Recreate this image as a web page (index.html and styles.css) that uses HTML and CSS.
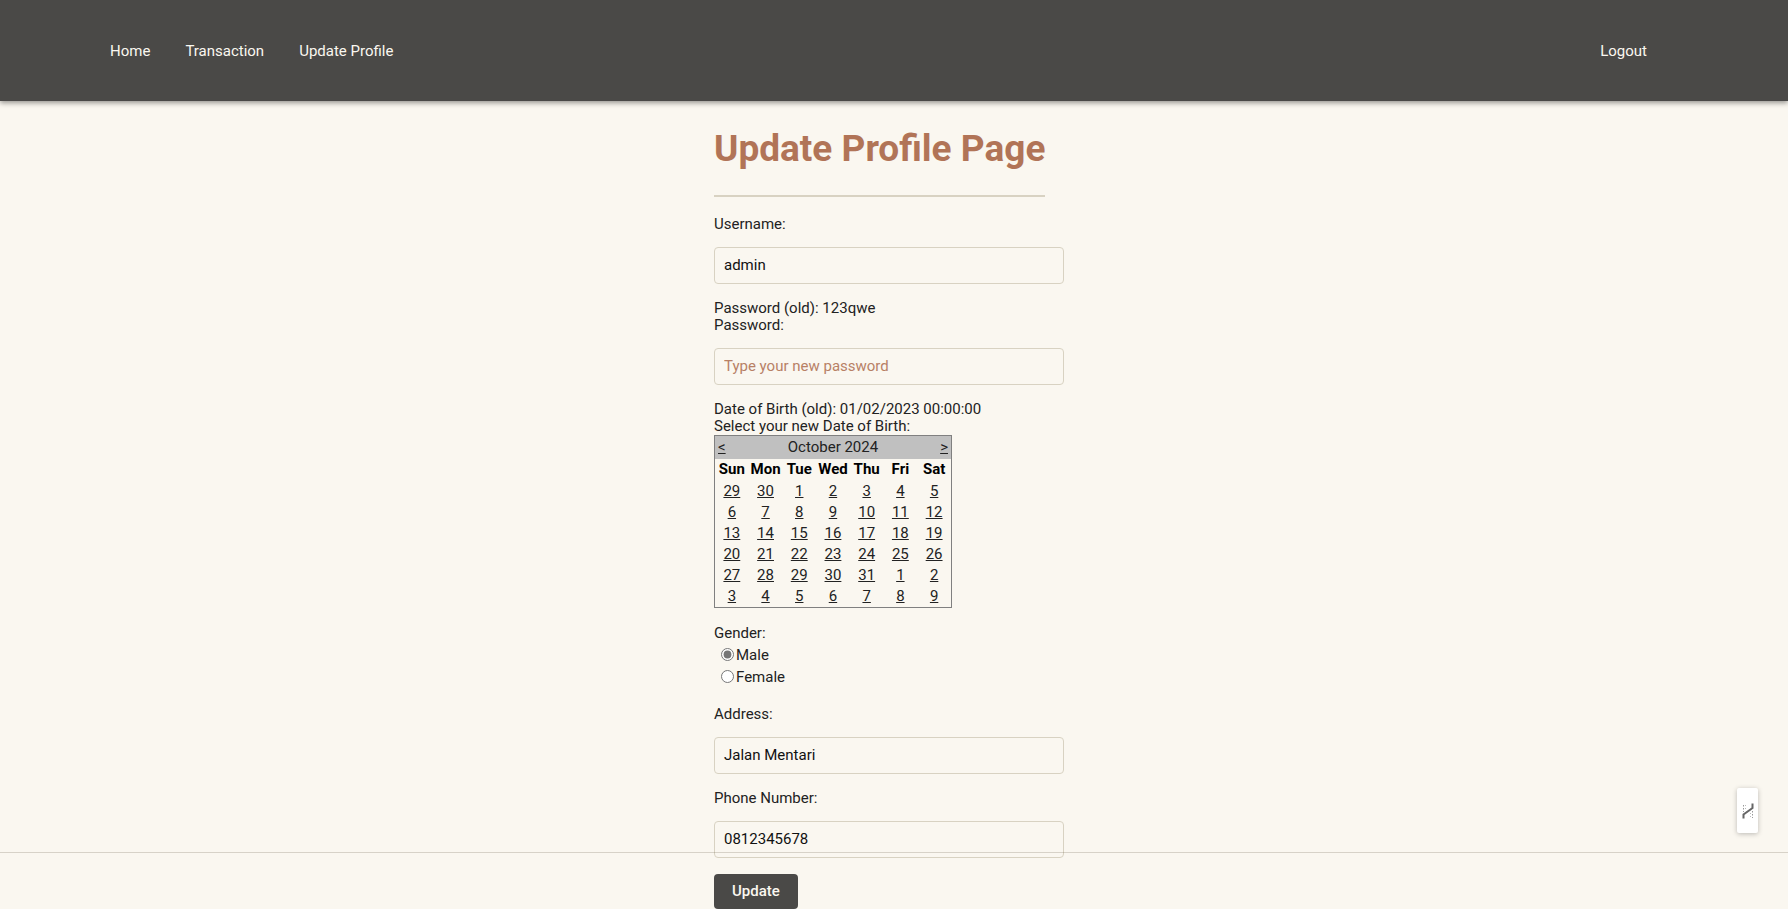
FILE: index.html
```html
<!DOCTYPE html>
<html lang="en">
<head>
<meta charset="utf-8">
<title>Update Profile Page</title>
<link rel="stylesheet" href="styles.css">
</head>
<body>
<header class="navbar">
  <nav class="nav-links">
    <a href="#">Home</a>
    <a href="#">Transaction</a>
    <a href="#">Update Profile</a>
  </nav>
  <a href="#">Logout</a>
</header>
<main class="content">
  <form class="profile-form">
    <div class="title-block">
      <h1>Update Profile Page</h1>
      <hr>
    </div>
    <div class="field">
      <label for="username">Username:</label>
      <input class="text-box" id="username" type="text" value="admin">
    </div>
    <div class="field">
      <div>
        <p>Password (old): 123qwe</p>
        <label for="password">Password:</label>
      </div>
      <input class="text-box" id="password" type="password" placeholder="Type your new password">
    </div>
    <div class="birth">
      <p>Date of Birth (old): 01/02/2023 00:00:00</p>
      <p id="dob-label">Select your new Date of Birth:</p>
      <table class="calendar" aria-labelledby="dob-label">
        <thead>
          <tr class="month"><td><a href="#">&lt;</a></td><td colspan="5">October 2024</td><td><a href="#">&gt;</a></td></tr>
          <tr><th>Sun</th><th>Mon</th><th>Tue</th><th>Wed</th><th>Thu</th><th>Fri</th><th>Sat</th></tr>
        </thead>
        <tbody>
          <tr><td><a href="#">29</a></td><td><a href="#">30</a></td><td><a href="#">1</a></td><td><a href="#">2</a></td><td><a href="#">3</a></td><td><a href="#">4</a></td><td><a href="#">5</a></td></tr>
          <tr><td><a href="#">6</a></td><td><a href="#">7</a></td><td><a href="#">8</a></td><td><a href="#">9</a></td><td><a href="#">10</a></td><td><a href="#">11</a></td><td><a href="#">12</a></td></tr>
          <tr><td><a href="#">13</a></td><td><a href="#">14</a></td><td><a href="#">15</a></td><td><a href="#">16</a></td><td><a href="#">17</a></td><td><a href="#">18</a></td><td><a href="#">19</a></td></tr>
          <tr><td><a href="#">20</a></td><td><a href="#">21</a></td><td><a href="#">22</a></td><td><a href="#">23</a></td><td><a href="#">24</a></td><td><a href="#">25</a></td><td><a href="#">26</a></td></tr>
          <tr><td><a href="#">27</a></td><td><a href="#">28</a></td><td><a href="#">29</a></td><td><a href="#">30</a></td><td><a href="#">31</a></td><td><a href="#">1</a></td><td><a href="#">2</a></td></tr>
          <tr><td><a href="#">3</a></td><td><a href="#">4</a></td><td><a href="#">5</a></td><td><a href="#">6</a></td><td><a href="#">7</a></td><td><a href="#">8</a></td><td><a href="#">9</a></td></tr>
        </tbody>
      </table>
    </div>
    <fieldset class="gender">
      <legend>Gender:</legend>
      <div class="option"><input type="radio" name="gender" id="male" checked><label for="male">Male</label></div>
      <div class="option"><input type="radio" name="gender" id="female"><label for="female">Female</label></div>
    </fieldset>
    <div class="field">
      <label for="address">Address:</label>
      <input class="text-box" id="address" type="text" value="Jalan Mentari">
    </div>
    <div class="field">
      <label for="phone">Phone Number:</label>
      <input class="text-box" id="phone" type="text" value="0812345678">
    </div>
    <button class="update" type="submit">Update</button>
  </form>
</main>
<div class="footer-line"></div>
<button class="side-tab" type="button" aria-label="Open side panel">
  <svg viewBox="0 0 12 18" width="12" height="18" fill="none" stroke="#666">
    <path d="M1.500 16.500V12.500L10.500 6V1.500" stroke-width="2"/>
    <path d="M1.500 3v7M10.500 9v7" stroke="#999" stroke-dasharray="1.500 1.500"/>
    <path d="M3.500 3v4M8.500 11v5" stroke="#bbb" stroke-dasharray="1 2"/>
  </svg>
</button>
</body>
</html>
```

FILE: styles.css
```css
* { box-sizing: border-box; }

body {
  margin: 0;
  background: #faf7f0;
  color: #222;
  font: 15px/17px Roboto, "Liberation Sans", sans-serif;
}

p { margin: 0; }

.navbar {
  display: flex;
  justify-content: space-between;
  align-items: center;
  padding: 43px 141px 41px 110px;
  background: #4a4947;
  box-shadow: 0 2px 5px rgba(0, 0, 0, 0.4);
}

.navbar a {
  color: #faf7f0;
  text-decoration: none;
}

.nav-links {
  display: flex;
  gap: 35px;
}

.content {
  display: flex;
  justify-content: center;
  padding-top: 26px;
}

.profile-form {
  display: flex;
  flex-direction: column;
  align-items: flex-start;
  gap: 16px;
  width: 360px;
}

.title-block { margin-bottom: 3px; }

h1 {
  margin: 0;
  color: #b17457;
  font-size: 37px;
  line-height: 44px;
  font-weight: 700;
}

hr {
  height: 2px;
  margin: 24px 0 0;
  border: 0;
  background: #d8d2c2;
}

.field {
  display: flex;
  flex-direction: column;
  gap: 14px;
  width: 350px;
}

.field label { display: block; }

.text-box {
  width: 100%;
  height: 37px;
  padding: 0 9px 1px;
  border: 1px solid #d8d2c2;
  border-radius: 4px;
  background: transparent;
  color: #111;
  font: 15px/17px Roboto, "Liberation Sans", sans-serif;
}

.text-box::placeholder {
  color: #b17457;
  opacity: 0.9;
}

.calendar {
  width: 238px;
  table-layout: fixed;
  border: 1px solid #808080;
  border-spacing: 0;
}

.calendar td,
.calendar th {
  padding: 2px 0;
  text-align: center;
}

.calendar th {
  padding-bottom: 3px;
  color: #000;
}

.calendar a { color: #222; }

.calendar .month td {
  padding: 3px;
  background: #c0c0c0;
}

.calendar .month td:first-child { text-align: left; }
.calendar .month td:last-child { text-align: right; }

.gender {
  margin: 1px 0 2px;
  padding: 0;
  border: 0;
}

.gender legend { padding: 0 0 2px; }

.option {
  display: flex;
  align-items: center;
  gap: 2px;
  height: 22px;
  padding-left: 7px;
}

.option input {
  width: 13px;
  height: 13px;
  margin: 0 0 2px;
  accent-color: #767676;
}

.update {
  height: 35px;
  padding: 0 18px;
  border: 0;
  border-radius: 4px;
  background: #4a4947;
  color: #faf7f0;
  font: 500 15px/17px Roboto, "Liberation Sans", sans-serif;
}

.footer-line {
  position: fixed;
  right: 0;
  bottom: 56px;
  left: 0;
  height: 1px;
  background: rgba(90, 80, 60, 0.22);
}

.side-tab {
  position: fixed;
  right: 30px;
  bottom: 76px;
  display: flex;
  align-items: center;
  justify-content: center;
  width: 21px;
  height: 45px;
  padding: 0;
  border: 0;
  border-radius: 2px;
  background: #fff;
  box-shadow: 0 1px 5px rgba(0, 0, 0, 0.25);
}
```
